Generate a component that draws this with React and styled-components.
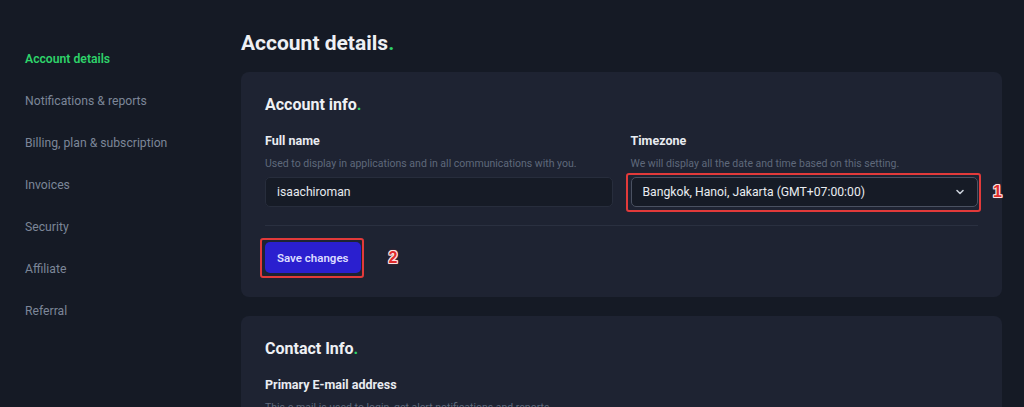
import React from "react";
import styled, { createGlobalStyle } from "styled-components";

const Global = createGlobalStyle`
  html, body { margin: 0; padding: 0; background: #151a25; }
  body { font-family: Roboto, "Noto Sans", Arial, sans-serif; color: #e6e9ef; overflow: hidden; }
  * { box-sizing: border-box; }
`;

const Page = styled.div`
  display: flex;
  width: 1024px;
  height: 407px;
  overflow: hidden;
  background: #151a25;
`;

const Sidebar = styled.nav`
  width: 241px;
  flex-shrink: 0;
  padding: 50px 0 0 25px;
  display: flex;
  flex-direction: column;
  gap: 24px;
`;

const NavItem = styled.a`
  font-size: 12.2px;
  line-height: 18px;
  color: ${(p) => (p.$active ? "#2ed36a" : "#7c8698")};
  font-weight: ${(p) => (p.$active ? 600 : 400)};
  text-decoration: none;
  cursor: pointer;
`;

const Main = styled.main`
  flex: 1;
  padding: 29px 22px 0 0;
  display: flex;
  flex-direction: column;
`;

const Dot = styled.span`
  color: #2ed36a;
`;

const PageTitle = styled.h1`
  margin: 0 0 15px;
  font-size: 21px;
  line-height: 28px;
  font-weight: 700;
  color: #eef0f4;
`;

const Card = styled.section`
  background: #1e2332;
  border-radius: 8px;
  padding: 22px 24px 24px;
  margin-bottom: 19px;
`;

const CardTitle = styled.h2`
  margin: 0 0 17px;
  font-size: 16px;
  line-height: 22px;
  font-weight: 700;
  color: #eef0f4;
`;

const FieldGrid = styled.div`
  display: grid;
  grid-template-columns: 1fr 1fr;
  column-gap: 18px;
`;

const Field = styled.div`
  display: flex;
  flex-direction: column;
`;

const Label = styled.label`
  font-size: 12.5px;
  line-height: 16px;
  font-weight: 700;
  color: #e9ecf1;
  margin-bottom: 8px;
`;

const Hint = styled.p`
  margin: 0 0 6px;
  font-size: 10.5px;
  line-height: 14px;
  color: #5f697b;
`;

const TextInput = styled.input`
  height: 30px;
  border-radius: 5px;
  border: 1px solid #272d3c;
  background: #161b26;
  color: #e6e9ef;
  font-family: inherit;
  font-size: 12.2px;
  padding: 0 11px;
  outline: none;
`;

const Marked = styled.div`
  position: relative;
  display: flex;
  flex-direction: column;
`;

const Outline = styled.span`
  position: absolute;
  inset: -4px -3px -5px -5px;
  border: 2px solid #e23a3a;
  border-radius: 3px;
  pointer-events: none;
`;

const Badge = styled.span`
  position: absolute;
  top: 50%;
  left: calc(100% + ${(p) => p.$gap}px);
  transform: translateY(-50%);
  font-family: "Liberation Sans", Arial, sans-serif;
  font-size: 16px;
  font-weight: 700;
  color: #e02b2b;
  text-shadow:
    1px 0 0 #fbe3e3, -1px 0 0 #fbe3e3, 0 1px 0 #fbe3e3, 0 -1px 0 #fbe3e3,
    1px 1px 0 #f6cfcf, -1px -1px 0 #f6cfcf, 1px -1px 0 #f6cfcf, -1px 1px 0 #f6cfcf,
    0 0 3px rgba(230, 60, 60, 0.8);
`;

const SelectBox = styled.div`
  height: 30px;
  border-radius: 5px;
  border: 1px solid #4a5161;
  background: #161b26;
  display: flex;
  align-items: center;
  justify-content: space-between;
  padding: 0 11px;
  font-size: 12.2px;
  color: #e9ecf1;
  cursor: pointer;
`;

const Chevron = () => (
  <svg width="12" height="12" viewBox="0 0 12 12" fill="none">
    <path d="M3 4.5 6 7.5 9 4.5" stroke="#c9ced8" strokeWidth="1.6" strokeLinecap="round" strokeLinejoin="round" />
  </svg>
);

const Divider = styled.hr`
  border: 0;
  height: 1px;
  background: #2a3040;
  margin: 18px 0 16px;
`;

const ButtonWrap = styled.div`
  position: relative;
  align-self: flex-start;
  display: inline-flex;
`;

const PrimaryButton = styled.button`
  height: 31px;
  padding: 0 12px;
  border: 0;
  border-radius: 5px;
  background: #2a1fcf;
  color: #dcdcff;
  font-family: inherit;
  font-size: 11.5px;
  font-weight: 600;
  white-space: nowrap;
  cursor: pointer;
`;

const FooterRow = styled.div`
  display: flex;
`;

export default function App() {
  const nav = [
    "Account details",
    "Notifications & reports",
    "Billing, plan & subscription",
    "Invoices",
    "Security",
    "Affiliate",
    "Referral",
  ];
  return (
    <Page>
      <Global />
      <Sidebar>
        {nav.map((n, i) => (
          <NavItem key={n} $active={i === 0}>{n}</NavItem>
        ))}
      </Sidebar>
      <Main>
        <PageTitle>Account details<Dot>.</Dot></PageTitle>
        <Card>
          <CardTitle>Account info<Dot>.</Dot></CardTitle>
          <FieldGrid>
            <Field>
              <Label>Full name</Label>
              <Hint>Used to display in applications and in all communications with you.</Hint>
              <TextInput defaultValue="isaachiroman" />
            </Field>
            <Field>
              <Label>Timezone</Label>
              <Hint>We will display all the date and time based on this setting.</Hint>
              <Marked>
                <SelectBox>
                  <span>Bangkok, Hanoi, Jakarta (GMT+07:00:00)</span>
                  <Chevron />
                </SelectBox>
                <Outline />
                <Badge $gap={15}>1</Badge>
              </Marked>
            </Field>
          </FieldGrid>
          <Divider />
          <FooterRow>
            <ButtonWrap>
              <PrimaryButton>Save changes</PrimaryButton>
              <Outline />
              <Badge $gap={28}>2</Badge>
            </ButtonWrap>
          </FooterRow>
        </Card>
        <Card>
          <CardTitle>Contact Info<Dot>.</Dot></CardTitle>
          <Label as="div">Primary E-mail address</Label>
          <Hint>This e-mail is used to login, get alert notifications and reports.</Hint>
        </Card>
      </Main>
    </Page>
  );
}
